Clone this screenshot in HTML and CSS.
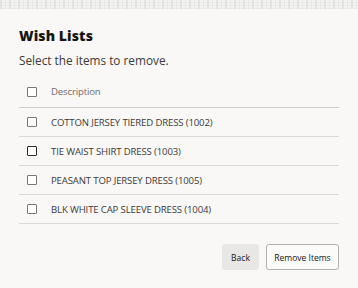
FILE: index.html
```html
<!DOCTYPE html>
<html lang="en">
<head>
<meta charset="utf-8">
<title>Wish Lists</title>
<link rel="stylesheet" href="styles.css">
</head>
<body>
<div class="strip"></div>
<main class="dialog">
  <h1 class="title">Wish Lists</h1>
  <p class="subtitle">Select the items to remove.</p>
  <div class="table">
    <div class="row head"><span class="box"></span><span class="label">Description</span></div>
    <div class="row"><span class="box"></span><span class="label">COTTON JERSEY TIERED DRESS (1002)</span></div>
    <div class="row"><span class="box dark"></span><span class="label">TIE WAIST SHIRT DRESS (1003)</span></div>
    <div class="row"><span class="box"></span><span class="label">PEASANT TOP JERSEY DRESS (1005)</span></div>
    <div class="row"><span class="box"></span><span class="label">BLK WHITE CAP SLEEVE DRESS (1004)</span></div>
  </div>
  <div class="actions">
    <button class="btn back">Back</button>
    <button class="btn outline">Remove Items</button>
  </div>
</main>
</body>
</html>
```
FILE: styles.css
```css
html, body {
  margin: 0;
  padding: 0;
  background: #f9f8f7;
  font-family: "Open Sans", "Noto Sans", sans-serif;
  color: #161513;
}
.strip {
  height: 9px;
  background:
    repeating-linear-gradient(90deg, rgba(200,200,200,0.35) 0 2px, rgba(255,255,255,0) 2px 5px, rgba(210,210,210,0.3) 5px 6px, rgba(255,255,255,0) 6px 9px),
    repeating-linear-gradient(0deg, #ececeb 0 1px, #f2f2f1 1px 3px);
}
.dialog {
  padding: 17px 19px 0 19px;
}
.title {
  margin: 0;
  font-size: 14px;
  line-height: 20px;
  font-weight: 800;
  letter-spacing: 0.1px;
}
.subtitle {
  margin: 6px 0 0 0;
  font-size: 11.8px;
  line-height: 16px;
  color: #3c3a37;
}
.table {
  margin-top: 8px;
}
.row {
  display: flex;
  align-items: center;
  height: 28px;
  border-bottom: 1px solid #dcd9d5;
  padding-left: 8px;
  font-size: 9.6px;
  letter-spacing: -0.15px;
  color: #3c3a37;
}
.row.head {
  height: 31px;
  border-bottom-color: #d2cfcb;
  color: #6f6c68;
}
.box {
  width: 8px;
  height: 8px;
  border: 1px solid #7a7773;
  border-radius: 1px;
  background: #fff;
  flex: none;
}
.box.dark {
  border-color: #2f2d2b;
}
.label {
  margin-left: 14px;
  white-space: nowrap;
}
.actions {
  display: flex;
  justify-content: flex-end;
  gap: 7px;
  margin-top: 20px;
}
.btn {
  height: 26px;
  font-family: "Open Sans", "Noto Sans", sans-serif;
  font-size: 8.5px;
  color: #161513;
  border-radius: 3px;
  padding: 0;
  cursor: pointer;
}
.btn.back {
  background: #e9e7e5;
  border: 1px solid #e9e7e5;
  width: 37px;
}
.btn.outline {
  background: #fbfbfa;
  border: 1px solid #b3b0ac;
  width: 73px;
}
```
